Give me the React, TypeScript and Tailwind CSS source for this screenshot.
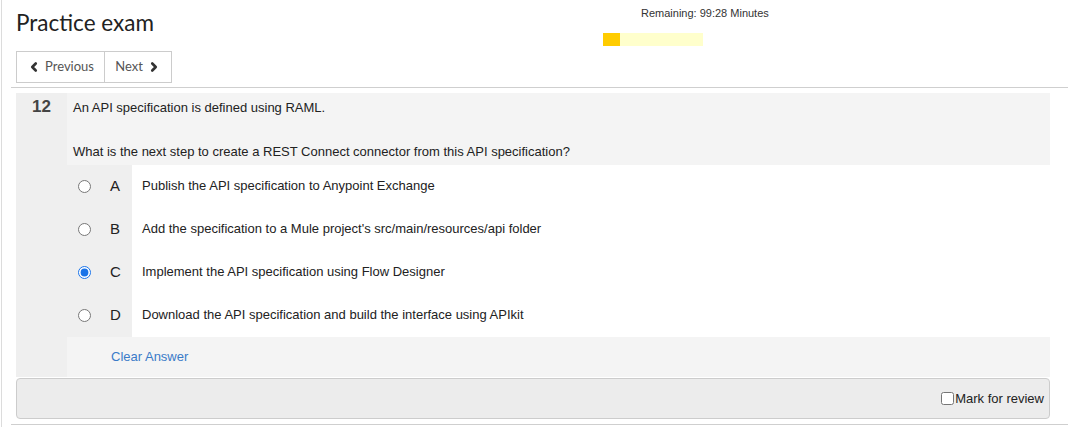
import { ChevronLeft, ChevronRight } from "lucide-react";

const options = [
  { key: "A", text: "Publish the API specification to Anypoint Exchange" },
  { key: "B", text: "Add the specification to a Mule project's src/main/resources/api folder" },
  { key: "C", text: "Implement the API specification using Flow Designer" },
  { key: "D", text: "Download the API specification and build the interface using APIkit" },
];

const selected = "C";

export default function App() {
  return (
    <div className="h-[427px] w-[1068px] overflow-hidden bg-white pl-px">
      <div className="h-full border-l border-[#dcdcdc] pl-[9px]">
        {/* header */}
        <div className="flex h-[87px] px-[5px]">
          <div className="w-[587px]">
            <h1 className="mt-[9px] font-['Lato',sans-serif] text-[22.5px] leading-[28px] text-[#222]">
              Practice exam
            </h1>
            <div className="mt-[14px] flex h-[32px] w-[156px] font-['Lato',sans-serif] text-[13px] text-[#555]">
              <button className="flex w-[89px] items-center justify-center gap-[4px] border border-[#ccc] bg-white">
                <ChevronLeft size={14} strokeWidth={4.5} className="text-[#333]" />
                Previous
              </button>
              <button className="-ml-px flex flex-1 items-center justify-center gap-[4px] border border-[#ccc] bg-white">
                Next
                <ChevronRight size={14} strokeWidth={4.5} className="text-[#333]" />
              </button>
            </div>
          </div>
          <div className="pt-[6px]">
            <div className="pl-[38px] font-['Liberation_Sans',Arial,sans-serif] text-[11px] leading-[14px] text-[#333]">
              Remaining: 99:28 Minutes
            </div>
            <div className="mt-[13px] flex h-[13px] w-[100px] bg-[#ffffcc]">
              <div className="h-full w-[17px] bg-[#ffcc00]" />
            </div>
          </div>
        </div>
        <div className="border-t border-[#cfcfcf]" />

        {/* question */}
        <div className="mt-[5px] mr-[18px] ml-[5px] bg-[#efefef] font-['Liberation_Sans',Arial,sans-serif] text-[13px] text-[#222]">
          <div className="flex">
            <div className="w-[51px] pt-[5px] text-center text-[17px] font-bold leading-[18px] text-[#444]">
              12
            </div>
            <div className="flex-1 bg-[#f4f4f4] pt-[6px] pb-[4px] pl-[6px] leading-[18px]">
              <p>An API specification is defined using RAML.</p>
              <p className="mt-[26px]">What is the next step to create a REST Connect connector from this API specification?</p>
            </div>
          </div>

          {options.map((o) => (
            <div key={o.key} className="flex h-[43px]">
              <div className="flex w-[116px] items-center pb-px">
                <input
                  type="radio"
                  name="answer"
                  readOnly
                  checked={o.key === selected}
                  className="ml-[62px] h-[13px] w-[13px] accent-[#1a73e8]"
                />
                <span className="ml-[19px] text-[15px] text-[#222]">{o.key}</span>
              </div>
              <div className="flex flex-1 items-center bg-white pb-px pl-[10px]">{o.text}</div>
            </div>
          ))}

          <div className="flex h-[40px]">
            <div className="w-[51px]" />
            <div className="flex flex-1 items-center bg-[#f4f4f4] pl-[44px] text-[#3a7bc8]">
              Clear Answer
            </div>
          </div>
        </div>

        {/* review bar */}
        <div className="mt-px mr-[18px] ml-[5px] flex h-[41px] items-center justify-end rounded-[4px] border border-[#cccccc] bg-[#ececec] pr-[5px] font-['Liberation_Sans',Arial,sans-serif] text-[13px] text-[#222]">
          <label className="flex items-center">
            <input type="checkbox" className="m-0 mr-px h-[13px] w-[13px]" />
            Mark for review
          </label>
        </div>
        <div className="mt-[5px] border-t border-[#cfcfcf]" />
      </div>
    </div>
  );
}
